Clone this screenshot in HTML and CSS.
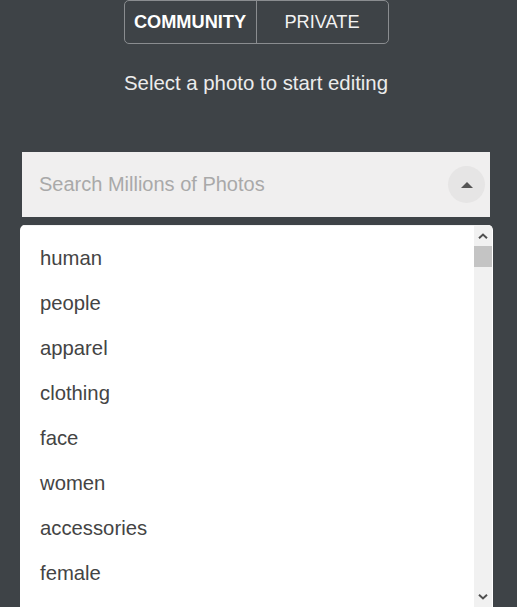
FILE: index.html
```html
<!DOCTYPE html>
<html>
<head>
<meta charset="utf-8">
<link rel="stylesheet" href="styles.css">
</head>
<body>
<div class="page">
  <div class="toggle">
    <div class="tab tab-active">COMMUNITY</div>
    <div class="tab">PRIVATE</div>
  </div>
  <p class="hint">Select a photo to start editing</p>
  <div class="search">
    <span class="placeholder">Search Millions of Photos</span>
    <span class="circle-btn">
      <svg width="12" height="7" viewBox="0 0 12 7"><polygon points="0,7 6,1 12,7" fill="#555"/></svg>
    </span>
  </div>
  <div class="dropdown">
    <ul class="list">
      <li>human</li>
      <li>people</li>
      <li>apparel</li>
      <li>clothing</li>
      <li>face</li>
      <li>women</li>
      <li>accessories</li>
      <li>female</li>
    </ul>
    <div class="scrollbar">
      <div class="sb-arrow">
        <svg width="10" height="6" viewBox="0 0 10 6"><polyline points="1,5.2 5,1.5 9,5.2" fill="none" stroke="#505050" stroke-width="2"/></svg>
      </div>
      <div class="sb-track"><div class="sb-thumb"></div></div>
      <div class="sb-arrow">
        <svg width="10" height="6" viewBox="0 0 10 6"><polyline points="1,0.8 5,4.5 9,0.8" fill="none" stroke="#505050" stroke-width="2"/></svg>
      </div>
    </div>
  </div>
</div>
</body>
</html>
```
FILE: styles.css
```css
html, body {
  margin: 0;
  padding: 0;
  background: #3e4347;
  overflow: hidden;
  height: 607px;
}
body {
  font-family: "Liberation Sans", Arial, sans-serif;
}
.page {
  width: 468px;
  margin-left: 22px;
  display: flex;
  flex-direction: column;
  align-items: center;
}
.toggle {
  display: flex;
  width: 265px;
  height: 44px;
  box-sizing: border-box;
  border: 1px solid #8a8d90;
  border-radius: 5px;
}
.tab {
  flex: 1;
  display: flex;
  align-items: center;
  justify-content: center;
  color: #f2f2f2;
  font-size: 18.2px;
}
.tab-active {
  font-weight: bold;
  border-right: 1px solid #8a8d90;
  color: #ffffff;
}
.hint {
  margin: 28px 0 0;
  font-size: 20.4px;
  line-height: 23px;
  color: #ececec;
}
.search {
  align-self: stretch;
  margin-top: 57px;
  height: 65px;
  background: #f0efef;
  display: flex;
  align-items: center;
  justify-content: space-between;
  padding: 0 5px 0 17px;
}
.placeholder {
  font-size: 20px;
  color: #a9a9a9;
}
.circle-btn {
  width: 37px;
  height: 37px;
  border-radius: 50%;
  background: #e6e5e5;
  display: flex;
  align-items: center;
  justify-content: center;
}
.dropdown {
  align-self: stretch;
  margin: 8px -3px 0 -2px;
  height: 382px;
  background: #ffffff;
  border-radius: 5px 5px 0 0;
  display: flex;
  overflow: hidden;
}
.list {
  flex: 1;
  list-style: none;
  margin: 0;
  padding: 10px 0 0 20px;
  border-top: 1px solid #f3f3f3;
}
.list li {
  font-size: 20.3px;
  line-height: 45px;
  color: #444444;
}
.scrollbar {
  width: 18px;
  margin-right: 1px;
  background: #f1f1f1;
  display: flex;
  flex-direction: column;
}
.sb-arrow {
  height: 21px;
  display: flex;
  align-items: center;
  justify-content: center;
}
.sb-track {
  flex: 1;
}
.sb-thumb {
  height: 21px;
  background: #c4c4c4;
}
```
